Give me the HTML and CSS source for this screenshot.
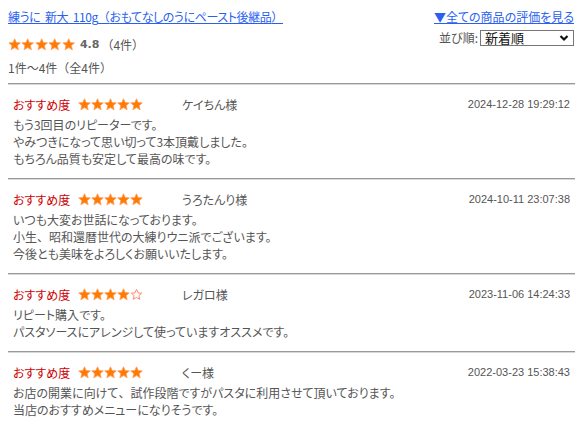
FILE: index.html
```html
<!DOCTYPE html>
<html lang="ja">
<head>
<meta charset="utf-8">
<link rel="stylesheet" href="styles.css">
</head>
<body>
<svg width="0" height="0" class="defs">
  <defs>
    <symbol id="star" viewBox="0 0 13 13">
      <polygon points="6.5,0.8 8.2,4.6 12.3,4.9 9.2,7.6 10.1,11.8 6.5,9.6 2.9,11.8 3.8,7.6 0.7,4.9 4.8,4.6" fill="#ff7a00" stroke="#ffa060" stroke-width="0.9" stroke-linejoin="round"/>
    </symbol>
    <symbol id="star-empty" viewBox="0 0 13 13">
      <polygon points="6.5,1.3 8.0,4.9 11.7,5.2 8.9,7.6 9.7,11.3 6.5,9.4 3.3,11.3 4.1,7.6 1.3,5.2 5.0,4.9" fill="#fff" stroke="#ff8a6a" stroke-width="1" stroke-linejoin="round"/>
    </symbol>
  </defs>
</svg>

<div class="top">
  <div class="top-left">
    <a class="title" href="#">練うに&nbsp; 新大&nbsp; 110g<span class="fw">（</span>おもてなしのうにペースト後継品<span class="fw">）</span></a>
    <div class="rating">
      <span class="stars">
        <svg class="st"><use href="#star"/></svg><svg class="st"><use href="#star"/></svg><svg class="st"><use href="#star"/></svg><svg class="st"><use href="#star"/></svg><svg class="st"><use href="#star"/></svg>
      </span>
      <span class="score">4.8</span>
      <span class="cnt fw">（4件）</span>
    </div>
    <div class="count fw">1件～4件（全4件）</div>
  </div>
  <div class="top-right">
    <a class="all" href="#">▼全ての商品の評価を見る</a>
    <div class="sort">
      <span>並び順:</span>
      <div class="select"><span>新着順</span>
        <svg class="chev" width="10" height="8" viewBox="0 0 10 8"><path d="M1.5 2 L5 5.5 L8.5 2" fill="none" stroke="#111" stroke-width="2.2"/></svg>
      </div>
    </div>
  </div>
</div>

<div class="reviews">
  <div class="review">
    <div class="rhead">
      <div class="rate"><span class="lbl">おすすめ度</span><span class="stars"><svg class="st"><use href="#star"/></svg><svg class="st"><use href="#star"/></svg><svg class="st"><use href="#star"/></svg><svg class="st"><use href="#star"/></svg><svg class="st"><use href="#star"/></svg></span></div>
      <span class="name">ケイちん様</span>
      <span class="date">2024-12-28 19:29:12</span>
    </div>
    <p class="body">もう3回目のリピーターです。<br>やみつきになって思い切って3本頂戴しました。<br>もちろん品質も安定して最高の味です。</p>
  </div>
  <div class="review">
    <div class="rhead">
      <div class="rate"><span class="lbl">おすすめ度</span><span class="stars"><svg class="st"><use href="#star"/></svg><svg class="st"><use href="#star"/></svg><svg class="st"><use href="#star"/></svg><svg class="st"><use href="#star"/></svg><svg class="st"><use href="#star"/></svg></span></div>
      <span class="name">うろたんり様</span>
      <span class="date">2024-10-11 23:07:38</span>
    </div>
    <p class="body">いつも大変お世話になっております。<br>小生<span class="fw">、</span>昭和還暦世代の大練りウニ派でございます。<br>今後とも美味をよろしくお願いいたします。</p>
  </div>
  <div class="review">
    <div class="rhead">
      <div class="rate"><span class="lbl">おすすめ度</span><span class="stars"><svg class="st"><use href="#star"/></svg><svg class="st"><use href="#star"/></svg><svg class="st"><use href="#star"/></svg><svg class="st"><use href="#star"/></svg><svg class="st"><use href="#star-empty"/></svg></span></div>
      <span class="name">レガロ様</span>
      <span class="date">2023-11-06 14:24:33</span>
    </div>
    <p class="body">リピート購入です。<br>パスタソースにアレンジして使っていますオススメです。</p>
  </div>
  <div class="review">
    <div class="rhead">
      <div class="rate"><span class="lbl">おすすめ度</span><span class="stars"><svg class="st"><use href="#star"/></svg><svg class="st"><use href="#star"/></svg><svg class="st"><use href="#star"/></svg><svg class="st"><use href="#star"/></svg><svg class="st"><use href="#star"/></svg></span></div>
      <span class="name">くー様</span>
      <span class="date">2022-03-23 15:38:43</span>
    </div>
    <p class="body">お店の開業に向けて<span class="fw">、</span>試作段階ですがパスタに利用させて頂いております。<br>当店のおすすめメニューになりそうです。</p>
  </div>
</div>
</body>
</html>
```

FILE: styles.css
```css
html, body {
  margin: 0;
  padding: 0;
  background: #fff;
}
body {
  padding: 8px 8px 0 8px;
  font-family: "Noto Sans CJK JP", "Noto Sans", sans-serif;
  font-size: 12px;
  line-height: 17px;
  color: #555;
  font-feature-settings: "palt";
}
.fw {
  font-feature-settings: normal;
}
.defs {
  position: absolute;
  width: 0;
  height: 0;
}
a {
  color: #2a5ff0;
  text-decoration: underline;
}
.top {
  display: flex;
  justify-content: space-between;
  padding-right: 1px;
}
.top-left {
  display: flex;
  flex-direction: column;
}
.title {
  display: block;
  height: 17px;
  letter-spacing: -0.4px;
}
.rating {
  display: flex;
  align-items: center;
  margin-top: 11px;
  height: 17px;
}
.stars {
  display: inline-flex;
  align-items: center;
}
.st {
  width: 13px;
  height: 13px;
  display: block;
}
.rating .st {
  width: 13.4px;
}
.score {
  font-family: "DejaVu Sans", sans-serif;
  font-weight: bold;
  font-size: 11px;
  color: #666;
  margin-left: 5px;
}
.cnt {
  margin-left: 2px;
}
.count {
  margin-top: 6px;
}
.top-right {
  display: flex;
  flex-direction: column;
  align-items: flex-end;
}
.all {
  display: block;
  height: 17px;
}
.sort {
  display: flex;
  align-items: center;
  margin-top: 4px;
  color: #555;
}
.select {
  display: flex;
  align-items: center;
  justify-content: space-between;
  width: 84px;
  height: 14px;
  border: 1px solid #777;
  margin-left: 2px;
  padding: 0 4px 0 4px;
  color: #111;
  font-size: 13px;
}
.reviews {
  margin-top: 7px;
}
.review {
  border-top: 1px solid #999;
  box-shadow: inset 0 1px 0 #d8d8d8;
  padding: 12px 5px 11px 5px;
}
.rhead {
  display: flex;
  align-items: center;
  height: 17px;
}
.rate {
  display: flex;
  align-items: center;
  width: 169px;
}
.lbl {
  color: #c00;
  width: 65px;
}
.name {
  flex: 1;
  color: #555;
}
.date {
  font-family: "Liberation Sans", sans-serif;
  font-size: 11px;
  color: #555;
}
.body {
  margin: 3px 0 0 0;
}
```
